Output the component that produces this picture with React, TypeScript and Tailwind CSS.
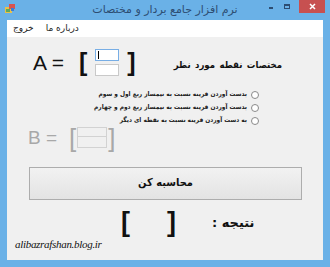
export default function App() {
  const fa = "font-['DejaVu_Sans',sans-serif]";
  const fc = "font-['DejaVu_Sans_Condensed','DejaVu_Sans',sans-serif]";
  const lat = "font-['Liberation_Sans',sans-serif]";
  return (
    <div className="w-[330px] h-[267px] bg-[#6ab1e7] flex flex-col overflow-hidden select-none">
      {/* Title bar */}
      <div className="h-[20px] grid grid-cols-[1fr_auto_1fr] items-start">
        <div className="pl-[5px] pt-[4px]">
          <svg width="11" height="10" viewBox="0 0 11 10">
            <rect x="0" y="3" width="7" height="6" fill="#e8c14a" />
            <rect x="4" y="0" width="6" height="5" fill="#d9534f" />
            <rect x="1" y="5" width="4" height="3" fill="#5fa85f" />
            <rect x="6" y="4" width="3" height="3" fill="#3b7bd6" />
          </svg>
        </div>
        <div className={`${fa} text-[11px] leading-[20px] text-[#2d4d72] text-center`} dir="rtl">
          نرم افزار جامع بردار و مختصات
        </div>
        <div className="flex justify-end items-start">
          <div className="w-[13px] h-[13px] flex items-center justify-center mr-[3px]">
            <div className="w-[4px] h-[2px] bg-[#2d4d72] mt-[2px]" />
          </div>
          <div className="w-[13px] h-[13px] flex items-center justify-center mr-[6px]">
            <div className="w-[6px] h-[5px] border border-[#2d4d72] border-t-2 -mt-[1px]" />
          </div>
          <div className="w-[26px] h-[13px] bg-[#c75050] flex items-center justify-center mr-[5px]">
            <svg width="7" height="7" viewBox="0 0 7 7">
              <path d="M1 1 L6 6 M6 1 L1 6" stroke="#ffffff" strokeWidth="1.5" />
            </svg>
          </div>
        </div>
      </div>
      {/* Menu */}
      <div className={`mx-[7px] h-[17px] bg-white flex items-center ${fa} text-[9px] text-[#222]`}>
        <span className="ml-[6px]">خروج</span>
        <span className="ml-[12px]">درباره ما</span>
      </div>
      {/* Client area */}
      <div className="mx-[7px] flex-1 mb-[7px] bg-[#f0f0f0] flex flex-col">
        {/* Row A */}
        <div className="mt-[10px] h-[30px] flex items-center justify-between">
          <div className="flex items-center ml-[26px]">
            <span className={`${lat} text-[21px] leading-none text-[#111]`}>A =</span>
            <span className={`${lat} text-[25px] leading-none font-bold text-[#111] ml-[15px]`}>[</span>
            <div className="flex flex-col gap-[3px] ml-[8px]">
              <div className="w-[24px] h-[12px] bg-white border border-[#78aee5] flex items-center pl-[2px]">
                <div className="w-px h-[8px] bg-black" />
              </div>
              <div className="w-[24px] h-[12px] bg-white border border-[#c9c9c9]" />
            </div>
            <span className={`${lat} text-[25px] leading-none font-bold text-[#111] ml-[8px]`}>]</span>
          </div>
          <div className={`${fc} font-bold text-[9.5px] [word-spacing:1.5px] text-[#111] mr-[41px] mt-[6px]`} dir="rtl">
            مختصات نقطه مورد نظر
          </div>
        </div>
        {/* Radios */}
        <div className={`mt-[11px] flex flex-col items-end mr-[64px] ${fc} text-[6.5px] font-bold text-[#222]`}>
          {[
            "بدست آوردن قرینه نسبت به نیمساز ربع اول و سوم",
            "بدست آوردن قرینه نسبت به نیمساز ربع دوم و چهارم",
            "به دست آوردن قرینه نسبت به نقطه ای دیگر",
          ].map((t) => (
            <div key={t} className="h-[13px] flex items-center gap-[4px]">
              <span dir="rtl">{t}</span>
              <div className="w-[8px] h-[8px] rounded-full border border-[#8a8a8a] bg-white" />
            </div>
          ))}
        </div>
        {/* Row B */}
        <div className="-mt-[2px] h-[25px] flex items-center ml-[21px] text-[#a8a8a8]">
          <span className={`${lat} text-[19px] leading-none`}>B =</span>
          <span className={`${lat} text-[26px] leading-none ml-[12px]`}>[</span>
          <div className="flex flex-col ml-[1px]">
            <div className="w-[30px] h-[10px] border border-[#d2d2d2] bg-[#f0f0f0]" />
            <div className="w-[30px] h-[11px] border border-[#d2d2d2] border-t-0 bg-[#f0f0f0]" />
          </div>
          <span className={`${lat} text-[26px] leading-none ml-[1px]`}>]</span>
        </div>
        {/* Button */}
        <div
          className={`mt-[17px] ml-[22px] w-[273px] h-[33px] border border-[#adadad] bg-gradient-to-b from-[#f2f2f2] to-[#e3e3e3] flex items-center justify-center ${fc} font-bold text-[11px] text-[#111]`}
          dir="rtl"
        >
          محاسبه کن
        </div>
        {/* Result */}
        <div className="mt-[10px] h-[25px] flex items-center">
          <span className={`${lat} text-[27px] leading-none font-bold text-[#111] ml-[114px]`}>[</span>
          <span className={`${lat} text-[27px] leading-none font-bold text-[#111] ml-[37px]`}>]</span>
          <span className={`${fa} font-bold text-[13px] text-[#111] ml-[36px]`} dir="rtl">
            نتیجه :
          </span>
        </div>
        {/* URL */}
        <div className={`ml-[8px] mt-[4px] font-['Liberation_Serif',serif] italic text-[11px] leading-none tracking-[-0.3px] text-[#111]`}>
          alibazrafshan.blog.ir
        </div>
      </div>
    </div>
  );
}
